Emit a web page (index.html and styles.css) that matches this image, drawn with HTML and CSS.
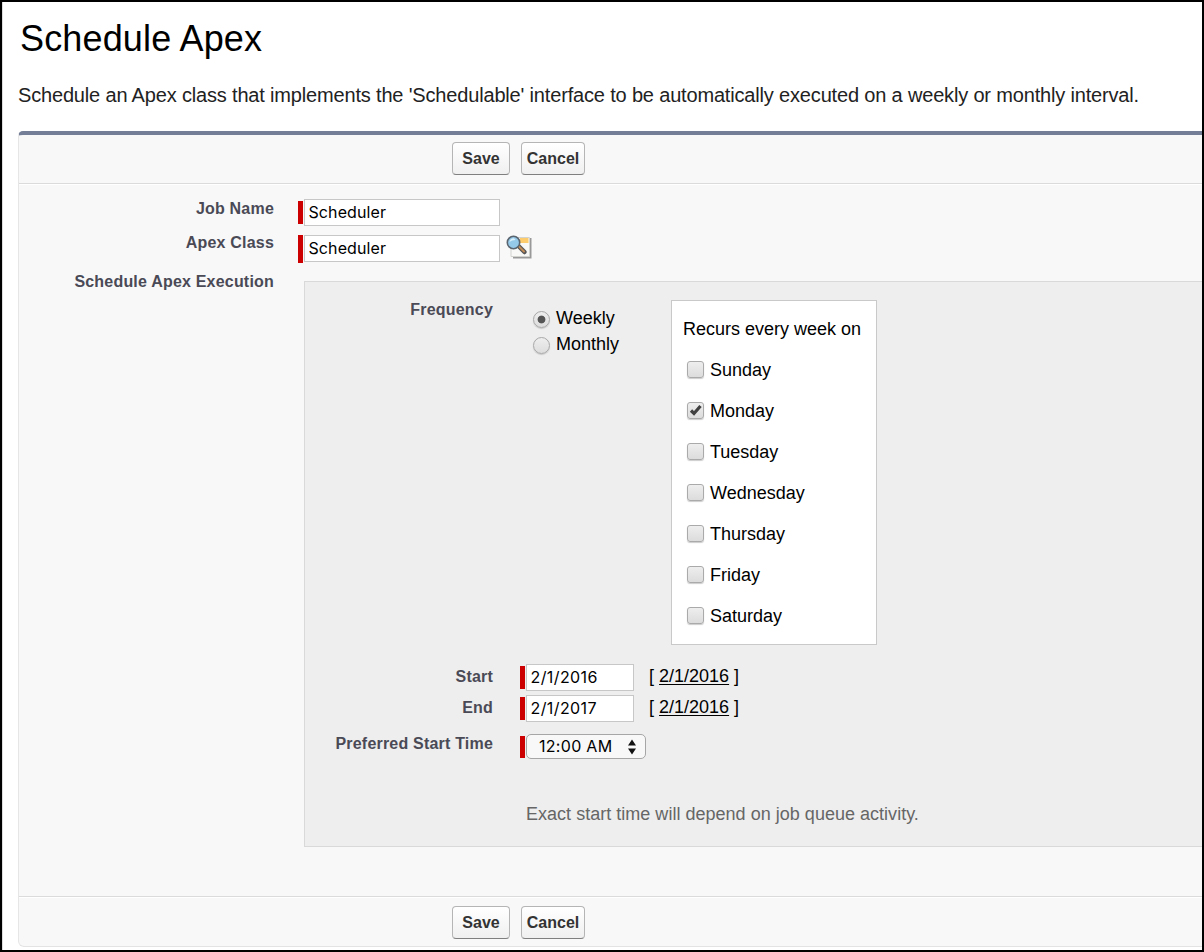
FILE: index.html
```html
<!DOCTYPE html>
<html lang="en">
<head>
<meta charset="utf-8">
<title>Schedule Apex</title>
<link rel="stylesheet" href="styles.css">
</head>
<body>
<main class="page">
  <h1 class="title">Schedule Apex</h1>
  <p class="intro">Schedule an Apex class that implements the 'Schedulable' interface to be automatically executed on a weekly or monthly interval.</p>
  <form class="panel">
    <div class="actions actions-top"><button type="button" class="btn save">Save</button><button type="button" class="btn cancel">Cancel</button></div>
    <div class="fields">
      <div class="row job"><label class="label">Job Name</label><i class="req"></i><input class="field" type="text" value="Scheduler"></div>
      <div class="row apex"><label class="label">Apex Class</label><i class="req tall"></i><input class="field" type="text" value="Scheduler">
        <svg class="lookup" width="28" height="26" viewBox="0 0 28 26">
          <path d="M8 3H25.500V23.500H7" fill="#999"/>
          <path d="M5 2.500H23.500V21.500H5Z" fill="#f8f8f6" stroke="#d2d2cf"/>
          <path d="M14 3H22.500V8H14Z" fill="#fdcc6c"/>
          <path d="M13.500 12L18.500 17" stroke="#555" stroke-width="4.500" stroke-linecap="round"/>
          <path d="M13 11.500L18 16.500" stroke="#c18b56" stroke-width="2" stroke-linecap="round"/>
          <circle cx="7.500" cy="7.500" r="6.200" fill="#94c9e9" stroke="#5b6570" stroke-width="1.600"/>
          <path d="M3.500 7Q4 3.500 8 3.300L9.500 5Q5.500 5 3.500 7Z" fill="#d9f1fc"/>
        </svg>
      </div>
      <div class="execution">
        <label class="label">Schedule Apex Execution</label>
        <section class="schedule">
          <div class="frequency">
            <span class="sublabel">Frequency</span>
            <div class="radios">
              <label class="radio"><i class="dot on"></i><span>Weekly</span></label>
              <label class="radio"><i class="dot"></i><span>Monthly</span></label>
            </div>
            <div class="days">
              <div class="days-title">Recurs every week on</div>
              <label class="day"><i class="check"></i><span>Sunday</span></label>
              <label class="day"><i class="check"><svg width="14" height="14" viewBox="0 0 14 14"><path d="M2 7.500L5 10.500L11.500 3" fill="none" stroke="#404040" stroke-width="3.200"/></svg></i><span>Monday</span></label>
              <label class="day"><i class="check"></i><span>Tuesday</span></label>
              <label class="day"><i class="check"></i><span>Wednesday</span></label>
              <label class="day"><i class="check"></i><span>Thursday</span></label>
              <label class="day"><i class="check"></i><span>Friday</span></label>
              <label class="day"><i class="check"></i><span>Saturday</span></label>
            </div>
          </div>
          <div class="date-row"><span class="sublabel">Start</span><i class="req"></i><input class="field date" type="text" value="2/1/2016"><span class="today">[ <a>2/1/2016</a> ]</span></div>
          <div class="date-row"><span class="sublabel">End</span><i class="req"></i><input class="field date" type="text" value="2/1/2017"><span class="today">[ <a>2/1/2016</a> ]</span></div>
          <div class="time-row"><span class="sublabel">Preferred Start Time</span><i class="req"></i>
            <div class="select"><span>12:00 AM</span><svg width="8" height="16" viewBox="0 0 8 16"><path d="M4 0.500L8 6.500H0ZM0 9.500H8L4 15.500Z" fill="#111"/></svg></div>
          </div>
          <p class="note">Exact start time will depend on job queue activity.</p>
        </section>
      </div>
    </div>
    <div class="actions actions-bottom"><button type="button" class="btn save">Save</button><button type="button" class="btn cancel">Cancel</button></div>
  </form>
</main>
</body>
</html>
```
FILE: styles.css
```css
* { box-sizing: border-box; }
body { margin: 0; font-family: "Liberation Sans", Arial, sans-serif; color: #000; }
i { display: block; }
.page { width: 1204px; height: 952px; border: 2px solid #000; padding-left: 15px; overflow: hidden; background: #fff; box-shadow: inset 1px 0 #ddd; }
.title { margin: 15px 0 0 3px; font-size: 36px; line-height: 44px; font-weight: 400; letter-spacing: 0.15px; white-space: nowrap; }
.intro { margin: 22px 0 0 1px; height: 48px; font-size: 20px; line-height: 24px; letter-spacing: -0.17px; color: #222; white-space: nowrap; }
.panel { margin-left: 1px; height: 816px; background: #f8f8f8; border-top: 4px solid #747e96; border-left: 1px solid #e6e6e6; border-bottom: 1px solid #e3e3e3; border-radius: 5px 0 0 6px; }
.actions { display: flex; gap: 11px; padding-left: 433px; }
.actions-top { height: 50px; padding-top: 7px; border-bottom: 1px solid #fff; box-shadow: inset 0 -1px #dbdbdb; }
.actions-bottom { height: 50px; padding-top: 9px; border-top: 1px solid #dbdbdb; box-shadow: inset 0 1px #fff; }
.btn { height: 33px; padding: 0; border: 1px solid #b5b5b5; border-bottom-color: #7f7f7f; border-radius: 4px; background: linear-gradient(#fff, #f0f0f0); color: #333; font: bold 16px/30px "Liberation Sans", Arial, sans-serif; }
.save { width: 58px; }
.cancel { width: 64px; }
.fields { height: 711px; }
.row { display: flex; }
.job { height: 50px; padding-top: 14px; }
.apex { height: 46px; }
.label { flex: none; width: 255px; text-align: right; font-size: 16px; line-height: 20px; font-weight: bold; color: #4a4a56; letter-spacing: 0.2px; white-space: nowrap; }
.apex .label { margin-top: -2px; }
.req { flex: none; width: 5px; height: 23px; margin: 2px 1px 0 24px; background: #c00; }
.req.tall { height: 28px; margin-top: 0; }
.field { width: 196px; height: 27px; padding: 0 4px 2px 3.5px; border: 1px solid #c7c7c7; background: #fff; color: #000; font: 16px Inter, Roboto, sans-serif; letter-spacing: 0.1px; }
.lookup { margin-left: 6px; }
.execution { display: flex; }
.execution .label { margin-top: -9px; }
.schedule { width: 898px; height: 566px; margin: 0 0 0 30px; background: #eee; border: 1px solid #d9d9d9; border-right: 0; }
.frequency { display: flex; height: 382px; padding-top: 18px; }
.sublabel { flex: none; width: 188px; text-align: right; font-size: 16px; line-height: 20px; font-weight: bold; color: #4a4a56; letter-spacing: 0.2px; white-space: nowrap; }
.radios { width: 138px; margin: 5px 0 0 40px; font-size: 18px; }
.radio { display: flex; gap: 6px; height: 26px; line-height: 26px; }
.dot { width: 17px; height: 17px; margin-top: 6px; border: 1px solid #a8a8a8; border-radius: 50%; background: linear-gradient(#eee, #ddd); box-shadow: 0 1px 1px #c9c9c9; }
.dot.on { background: radial-gradient(circle, #555 0 3.5px, transparent 4.3px), linear-gradient(#eee, #ddd); }
.days { width: 206px; height: 345px; padding: 8px 0 0 11px; background: #fff; border: 1px solid #c9c9c9; font-size: 18px; white-space: nowrap; }
.days-title, .day { height: 41px; line-height: 41px; }
.day { display: flex; gap: 6px; padding-left: 4px; }
.check { width: 17px; height: 17px; margin-top: 11px; border: 1px solid #aaa; border-radius: 3px; background: linear-gradient(#eee, #dcdcdc); box-shadow: 0 1px 1px #ccc; }
.check svg { display: block; margin-left: 1px; }
.date-row { display: flex; height: 31px; }
.date-row .sublabel { margin-top: 3px; }
.date-row .req, .time-row .req { margin-left: 27px; }
.date { width: 108px; letter-spacing: 0.4px; }
.today { margin-left: 15px; font-size: 18px; line-height: 24px; white-space: nowrap; }
.today a { text-decoration: underline; text-underline-offset: 2px; }
.time-row { display: flex; height: 69px; padding-top: 8px; }
.time-row .req { height: 22px; }
.select { display: flex; align-items: center; justify-content: space-between; width: 120px; height: 25px; padding: 0 9px 0 12px; background: #f8f8f8; border: 1px solid #a6a6a6; border-radius: 5px; font: 16px Inter, Roboto, sans-serif; letter-spacing: 0.3px; }
.select span { margin-top: -2px; }
.note { margin: 9px 0 0 221px; font-size: 18px; line-height: 20px; letter-spacing: 0.02px; color: #666; white-space: nowrap; }
```
